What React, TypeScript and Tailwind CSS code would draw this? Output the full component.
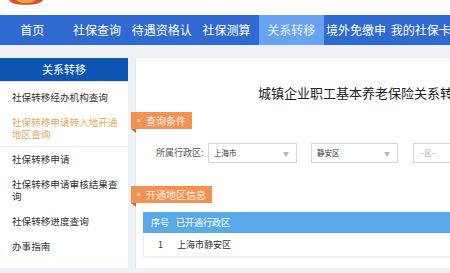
import React from "react";

const font = '"Noto Sans CJK SC", "Noto Sans", sans-serif';

const navItems = ["首页", "社保查询", "待遇资格认", "社保测算", "关系转移", "境外免缴申", "我的社保卡"];

const sideItems = [
  { label: "社保转移经办机构查询" },
  { label: "社保转移申请转入地开通地区查询", active: true },
  { label: "社保转移申请" },
  { label: "社保转移申请审核结果查询" },
  { label: "社保转移进度查询" },
  { label: "办事指南" },
];

function Tag({ text }: { text: string }) {
  return (
    <div className="relative -ml-[5px] flex h-[17px] w-fit items-center bg-[#f59253] pl-[6px] pr-[6px]">
      <span className="mr-[6px] h-[3px] w-[3px] rounded-full bg-[#fde4d2]" />
      <span className="text-[10px] leading-none text-[#fff3ea]">{text}</span>
      {/* folded corner */}
      <span className="absolute left-0 top-full h-0 w-0 border-l-[5px] border-t-[4px] border-l-transparent border-t-[#c86a33]" />
    </div>
  );
}

function Select({ value, width, placeholder }: { value: string; width: string; placeholder?: boolean }) {
  return (
    <div className={`flex h-[20px] items-center justify-between border border-[#d6d6d6] bg-white pl-[5px] pr-[7px] ${width}`}>
      <span className={`text-[7.5px] ${placeholder ? "text-[#b0b0b0]" : "text-[#333]"}`}>{value}</span>
      {!placeholder && <span className="text-[6px] text-[#b8b8b8]">▼</span>}
    </div>
  );
}

export default function App() {
  return (
    <div className="h-[273px] w-[450px] overflow-hidden bg-[#eef1f5]" style={{ fontFamily: font }}>
      {/* top strip with emblem */}
      <div className="h-[15px] bg-white pl-[9px]">
        <svg width="34" height="5" viewBox="0 0 34 5">
          <path d="M0 0 H34 C32 3.5 26 4.8 17 4.8 C8 4.8 2 3.5 0 0 Z" fill="#e24a2c" />
          <path d="M7 0 H27 C24 2.5 21 3 17 3 C13 3 10 2.5 7 0 Z" fill="#f4a83c" />
        </svg>
      </div>

      {/* nav */}
      <div className="flex h-[30px] bg-[#2f6ad0]">
        {navItems.map((item) => (
          <div
            key={item}
            className={`flex w-[64.75px] shrink-0 items-center justify-center whitespace-nowrap text-[12px] ${
              item === "关系转移" ? "bg-[#67a3f0] text-[#e8f1ff]" : "text-white"
            }`}
          >
            {item}
          </div>
        ))}
      </div>

      {/* content */}
      <div className="mt-[13px] flex h-[210px] gap-[7px]">
        {/* sidebar */}
        <div className="w-[128px] shrink-0 bg-white">
          <div className="flex h-[24px] items-center justify-center border-b border-[#f5dcc6] bg-[#0c55b3] text-[11px] text-white">
            关系转移
          </div>
          <div className="pt-[3px]">
            {sideItems.map((s) => (
              <div
                key={s.label}
                className={`border-b py-[6px] pl-[12px] pr-[4px] text-[9.6px] leading-[12px] ${
                  s.active ? "border-[#eeeeee] text-[#eba65c]" : "border-white text-[#333]"
                }`}
              >
                {s.label}
              </div>
            ))}
          </div>
        </div>

        {/* main panel */}
        <div className="flex-1 border-l border-[#e4e8ee] bg-white">
          <div className="mt-[27px] pl-[122px] text-[13px] leading-[16px] whitespace-nowrap text-[#222]">
            城镇企业职工基本养老保险关系转移
          </div>

          <div className="mt-[11px]">
            <Tag text="查询条件" />
          </div>

          <div className="mt-[14px] flex items-center pl-[20px]">
            <span className="w-[52px] text-[9px] text-[#555]">所属行政区:</span>
            <Select value="上海市" width="w-[89px]" />
            <div className="ml-[14px]">
              <Select value="静安区" width="w-[87px]" />
            </div>
            <div className="ml-[15px]">
              <Select value="--区--" width="w-[60px]" placeholder />
            </div>
          </div>

          <div className="mt-[23px]">
            <Tag text="开通地区信息" />
          </div>

          <div className="ml-[7px] mt-[9px] shadow-[0_1px_3px_rgba(0,0,0,0.06)]">
            <div className="flex h-[21px] items-center bg-[#5aa9e8] text-[9px] text-white">
              <span className="w-[33px] pl-[8px]">序号</span>
              <span>已开通行政区</span>
            </div>
            <div className="flex h-[24px] items-center border border-t-0 border-[#eeeeee] text-[9px] text-[#333]">
              <span className="w-[33px] pl-[14px]">1</span>
              <span>上海市静安区</span>
            </div>
          </div>
        </div>
      </div>
    </div>
  );
}
